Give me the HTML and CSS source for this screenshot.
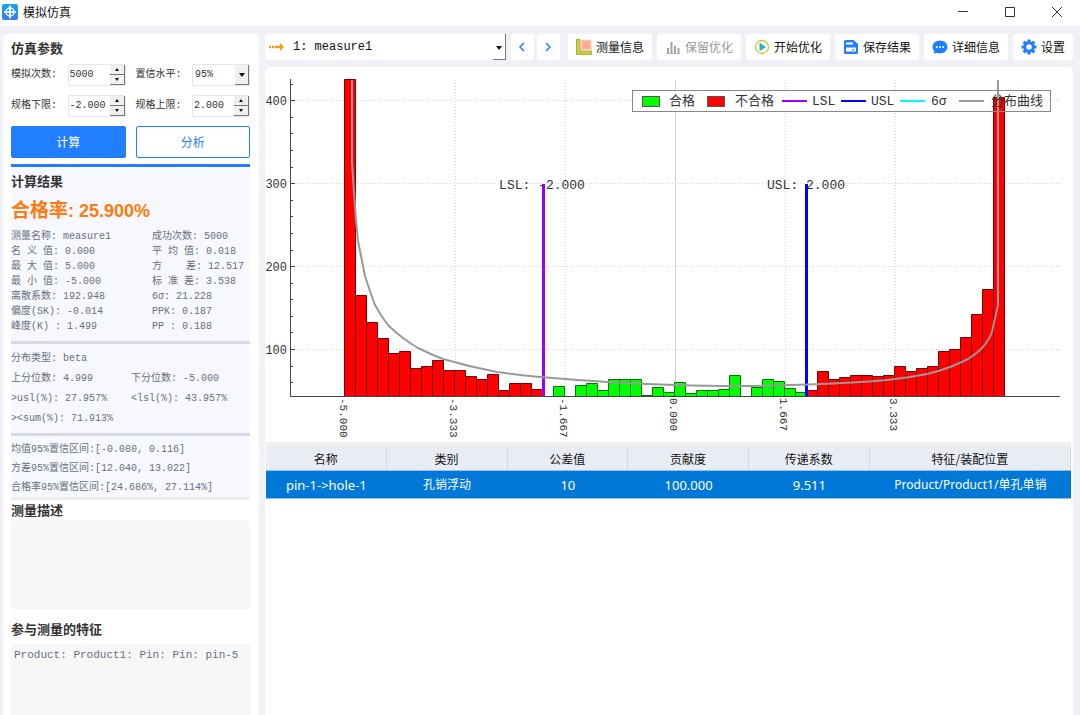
FILE: index.html
```html
<!DOCTYPE html>
<html lang="zh-CN">
<head>
<meta charset="utf-8">
<meta name="viewport" content="width=device-width, initial-scale=1">
<title>模拟仿真</title>
<link rel="stylesheet" href="styles.css">
</head>
<body>
<header class="titlebar">
  <svg class="app-icon" viewBox="0 0 16 16" aria-hidden="true">
    <defs><linearGradient id="app-bg" x1="0" y1="0" x2="0" y2="1"><stop offset="0" stop-color="#19a5f2"/><stop offset="1" stop-color="#3b7bea"/></linearGradient></defs>
    <rect width="16" height="16" rx="2" fill="url(#app-bg)"/>
    <circle cx="8" cy="8" r="4" fill="none" stroke="#fff" stroke-width="1.4"/>
    <path d="M8 1.6v12.8M2 8h12" stroke="#fff" stroke-width="1.6"/>
  </svg>
  <h1 class="title">模拟仿真</h1>
  <div class="window-controls">
    <button class="window-button" type="button" aria-label="最小化"><svg viewBox="0 0 12 12"><path d="M1 5.500h10"/></svg></button>
    <button class="window-button" type="button" aria-label="最大化"><svg viewBox="0 0 12 12"><path d="M1.5 1.5h9v9h-9z"/></svg></button>
    <button class="window-button" type="button" aria-label="关闭"><svg viewBox="0 0 12 12"><path d="M1 1l10 10M11 1L1 11"/></svg></button>
  </div>
</header>

<div class="workspace">
  <aside class="sidebar">
    <h2 class="heading">仿真参数</h2>
    <form class="params">
      <div class="field">
        <label for="runs">模拟次数:</label>
        <div class="spin">
          <input id="runs" type="text" value="5000">
          <div class="spin-buttons"><button type="button" class="step step-up" aria-label="增加模拟次数"></button><button type="button" class="step step-down" aria-label="减少模拟次数"></button></div>
        </div>
      </div>
      <div class="field">
        <label for="level">置信水平:</label>
        <div class="drop"><select id="level"><option>95%</option></select></div>
      </div>
      <div class="field">
        <label for="lower">规格下限:</label>
        <div class="spin">
          <input id="lower" type="text" value="-2.000">
          <div class="spin-buttons"><button type="button" class="step step-up" aria-label="增加下限"></button><button type="button" class="step step-down" aria-label="减少下限"></button></div>
        </div>
      </div>
      <div class="field">
        <label for="upper">规格上限:</label>
        <div class="spin">
          <input id="upper" type="text" value="2.000">
          <div class="spin-buttons"><button type="button" class="step step-up" aria-label="增加上限"></button><button type="button" class="step step-down" aria-label="减少上限"></button></div>
        </div>
      </div>
      <button class="action action-primary" type="button">计算</button>
      <button class="action" type="button">分析</button>
    </form>

    <section class="results">
      <h2 class="heading">计算结果</h2>
      <p class="rate"><span class="rate-label">合格率</span>: 25.900%</p>
      <div class="stats">
        <span>测量名称: measure1</span><span>成功次数: 5000</span>
        <span>名 义 值: 0.000</span><span>平 均 值: 0.018</span>
        <span>最 大 值: 5.000</span><span>方    差: 12.517</span>
        <span>最 小 值: -5.000</span><span>标 准 差: 3.538</span>
        <span>离散系数: 192.948</span><span>6σ: 21.228</span>
        <span>偏度(SK): -0.014</span><span>PPK: 0.187</span>
        <span>峰度(K) : 1.499</span><span>PP : 0.188</span>
      </div>
      <div class="quantiles">
        <span class="wide">分布类型: beta</span>
        <span>上分位数: 4.999</span><span>下分位数: -5.000</span>
        <span>&gt;usl(%): 27.957%</span><span>&lt;lsl(%): 43.957%</span>
        <span class="wide">&gt;&lt;sum(%): 71.913%</span>
      </div>
      <div class="intervals">
        <span>均值95%置信区间:[-0.080, 0.116]</span>
        <span>方差95%置信区间:[12.040, 13.022]</span>
        <span>合格率95%置信区间:[24.686%, 27.114%]</span>
      </div>
    </section>

    <h2 class="heading"><label for="description">测量描述</label></h2>
    <textarea class="note" id="description" readonly></textarea>
    <h2 class="heading heading-features"><label for="features">参与测量的特征</label></h2>
    <textarea class="note note-fill" id="features" readonly>Product: Product1: Pin: Pin: pin-5</textarea>
  </aside>

  <main class="main">
    <nav class="toolbar" aria-label="工具栏">
      <div class="measure">
        <svg class="measure-icon" viewBox="0 0 16 10" aria-hidden="true"><path d="M0 3.8h2.2v2.4H0zM3 3.8h2.2v2.4H3zM6 3.8h5V1l4 4-4 4V6.2H6z" fill="#f39a1e"/></svg>
        <select class="measure-select" aria-label="测量"><option>1: measure1</option></select>
      </div>
      <div class="pager">
        <button class="nav-button" type="button" aria-label="上一个"><svg viewBox="0 0 8 10"><path d="M6 1L2 5l4 4"/></svg></button>
        <button class="nav-button" type="button" aria-label="下一个"><svg viewBox="0 0 8 10"><path d="M2 1l4 4-4 4"/></svg></button>
      </div>
      <button class="tool" type="button">
        <svg class="icon" viewBox="0 0 16 16"><path d="M.5.500h3.500v11.500h11.500v3.500H.5z" fill="#c9d335" stroke="#98a428" stroke-width=".8"/><path d="M5 .8h10.500v10.200H5z" fill="#ffc3b3"/><path d="M6.500 2.200h7.500v7.300H6.500z" fill="#ffa795"/></svg>
        测量信息</button>
      <button class="tool" type="button" disabled>
        <svg class="icon" viewBox="0 0 16 16"><path d="M3 9v5M6.5 3v11M10 7v7M13.5 9v5" stroke="#a5a5a5" stroke-width="2"/><path d="M1 14.5h14" stroke="#b5b5b5"/></svg>
        保留优化</button>
      <button class="tool" type="button">
        <svg class="icon" viewBox="0 0 16 16"><circle cx="8" cy="8" r="6.500" fill="#fff" stroke="#b9cf36" stroke-width="1.3"/><path d="M5.500 3.800L12 8l-6.500 4.200z" fill="#22b3b8"/></svg>
        开始优化</button>
      <button class="tool" type="button">
        <svg class="icon" viewBox="0 0 16 16"><path d="M2.500 1h8L15 5v8.500A1.500 1.500 0 0 1 13.500 15h-11A1.500 1.500 0 0 1 1 13.500v-11A1.500 1.500 0 0 1 2.500 1z" fill="#217fff"/><path d="M3 3.500h7v2H3zM3 8.500h10v4H3z" fill="#fff"/><path d="M9.500 10h1.500v1.500H9.500z" fill="#217fff"/></svg>
        保存结果</button>
      <button class="tool" type="button">
        <svg class="icon" viewBox="0 0 16 16"><path d="M8 1.500c4.200 0 7.500 2.800 7.500 6.400S12.200 14.300 8 14.300c-1 0-1.900-.1-2.700-.4L2 14.600l.2-2.600C1.100 11 .5 9.500.5 7.900.500 4.300 3.800 1.500 8 1.500z" fill="#217fff"/><circle cx="4.800" cy="8" r="1" fill="#fff"/><circle cx="8" cy="8" r="1" fill="#fff"/><circle cx="11.200" cy="8" r="1" fill="#fff"/></svg>
        详细信息</button>
      <button class="tool" type="button">
        <svg class="icon" viewBox="0 0 16 16"><circle cx="8" cy="8" r="4.300" fill="none" stroke="#217fff" stroke-width="3"/><g stroke="#217fff" stroke-width="3.200"><path d="M8 .5v3M8 12.500v3M.5 8h3M12.500 8h3M2.700 2.700l2.100 2.100M11.200 11.200l2.100 2.100M13.300 2.700l-2.100 2.100M4.800 11.200l-2.100 2.100"/></g></svg>
        设置</button>
    </nav>

    <section class="panel">
      <svg class="chart" viewBox="265 67 808 375" role="img" aria-label="测量结果分布直方图">
        <g class="grid">
          <path d="M291 100.500H1060M291 183.500H1060M291 266.500H1060M291 349.500H1060M455.500 80V396M565.500 80V396M785.500 80V396M895.500 80V396"/>
          <path class="zero" d="M675.500 80V396"/>
        </g>
        <rect class="legend-back" x="632" y="90" width="419" height="22"/>
        <g class="bars" transform="translate(-.5 .5)">
          <path class="fail" d="M345 396V79h11V396zM356 396V295h11V396zM367 396V322h11V396zM378 396V338h11V396zM389 396V353h11V396zM400 396V351h11V396zM411 396V368h11V396zM422 396V366h11V396zM433 396V360h11V396zM444 396V370h11V396zM455 396V370h11V396zM466 396V376h11V396zM477 396V379h11V396zM488 396V374h11V396zM499 396V390h11V396zM510 396V383h11V396zM521 396V383h11V396zM532 396V389h11V396z"/>
          <path class="pass" d="M554 396V386h11V396zM576 396V385h11V396zM587 396V383h11V396zM598 396V390h11V396zM609 396V379h11V396zM620 396V379h11V396zM631 396V379h11V396zM642 396V395h11V396zM653 396V387h11V396zM664 396V392h11V396zM675 396V382h11V396zM686 396V393h11V396zM697 396V390h11V396zM708 396V390h11V396zM719 396V389h11V396zM730 396V375h11V396zM752 396V387h11V396zM763 396V379h11V396zM774 396V381h11V396zM785 396V388h11V396zM796 396V392h11V396z"/>
          <path class="fail" d="M807 396V390h11V396zM818 396V371h11V396zM829 396V379h11V396zM840 396V377h11V396zM851 396V375h11V396zM862 396V375h11V396zM873 396V376h11V396zM884 396V375h11V396zM895 396V366h11V396zM906 396V371h11V396zM917 396V368h11V396zM928 396V366h11V396zM939 396V351h11V396zM950 396V349h11V396zM961 396V337h11V396zM972 396V314h11V396zM983 396V289h11V396zM994 396V97h11V396z"/>
        </g>
        <path class="lsl" d="M543.500 184V396"/>
        <path class="usl" d="M806.500 184V396"/>
        <path class="curve" d="M352 80V163L356 220L358 241L365 276Q370 292 375 305Q381 316 388 325Q395 332 403 338Q411 344 418 348Q430 354 443 359Q470 367 497 372Q520 375 540 377Q575 380 608 382Q640 384 675 385Q740 387 790 385Q828 384 860 382Q880 381 895 379Q912 377 927 374Q940 371 950 367Q960 363 968 359Q976 354 982 348Q989 340 992 332L998 305V80"/>
        <path class="axis" d="M290.500 79V396.500H1060M290 100.500h5M290 183.500h5M290 266.500h5M290 349.500h5M290 84.500h3M290 117.500h3M290 133.500h3M290 150.500h3M290 167.500h3M290 200.500h3M290 216.500h3M290 233.500h3M290 250.500h3M290 283.500h3M290 299.500h3M290 316.500h3M290 332.500h3M290 366.500h3M290 382.500h3"/>
        <g class="y-labels">
          <text x="287" y="105">400</text><text x="287" y="188">300</text><text x="287" y="271">200</text><text x="287" y="354">100</text>
        </g>
        <g class="x-labels">
          <text transform="translate(340 398) rotate(90)">-5.000</text>
          <text transform="translate(450 398) rotate(90)">-3.333</text>
          <text transform="translate(560 398) rotate(90)">-1.667</text>
          <text transform="translate(670 398) rotate(90)">0.000</text>
          <text transform="translate(780 398) rotate(90)">1.667</text>
          <text transform="translate(890 398) rotate(90)">3.333</text>
        </g>
        <g class="limit-labels"><text x="542" y="189">LSL: -2.000</text><text x="806" y="189">USL: 2.000</text></g>
        <rect class="legend-frame" x="632.500" y="90.500" width="418" height="21"/>
        <rect class="pass swatch" x="642.500" y="96.500" width="17" height="10"/>
        <rect class="fail swatch" x="707.500" y="96.500" width="17" height="10"/>
        <path class="key lsl" d="M782 101h25"/>
        <path class="key usl" d="M841 101h25"/>
        <path class="key sigma" d="M900 101h25"/>
        <path class="key curve" d="M959 101h25"/>
        <g class="legend-text">
          <text x="669" y="105">合格</text><text x="735" y="105">不合格</text><text x="812" y="105">LSL</text><text x="871" y="105">USL</text><text x="931" y="105">6σ</text><text x="991" y="105">分布曲线</text>
        </g>
      </svg>

      <div class="table-wrap">
        <table class="table">
          <thead><tr><th>名称</th><th>类别</th><th>公差值</th><th>贡献度</th><th>传递系数</th><th class="col-wide">特征/装配位置</th></tr></thead>
          <tbody><tr><td>pin-1-&gt;hole-1</td><td class="chinese">孔销浮动</td><td>10</td><td>100.000</td><td>9.511</td><td class="chinese">Product/Product1/单孔单销</td></tr></tbody>
        </table>
      </div>
    </section>
  </main>
</div>
</body>
</html>
```
FILE: styles.css
```css
:root {
  --mono: "Liberation Mono", "Noto Sans CJK SC", monospace;
  --sans: "Noto Sans CJK SC", sans-serif;
  --blue: #217fff;
  --ink: #333;
  --muted: #687080;
}

* {
  box-sizing: border-box;
}

body {
  margin: 0;
  min-height: 100vh;
  display: flex;
  flex-direction: column;
  background: #eff1f6;
  color: #111;
  font: 12px/16px var(--sans);
}

button,
input,
select,
textarea {
  margin: 0;
  padding: 0;
  border: 0;
  border-radius: 0;
  background: none;
  color: inherit;
  font: inherit;
}

select {
  appearance: none;
}

h1,
h2,
p {
  margin: 0;
}

/* Title bar */
.titlebar {
  display: flex;
  align-items: center;
  height: 26px;
  padding: 0 0 3px 2px;
  background: #fff;
}

.app-icon {
  width: 16px;
  height: 16px;
  margin-right: 5px;
}

.title {
  flex: 1;
  font-size: 12px;
  font-weight: 400;
}

.window-controls {
  display: flex;
}

.window-button {
  display: grid;
  place-items: center;
  width: 47px;
  height: 22px;
}

.window-button svg {
  width: 12px;
  height: 12px;
  fill: none;
  stroke: #333;
}

.workspace {
  flex: 1;
  display: grid;
  grid-template-columns: 256px minmax(0, 1fr);
  gap: 6px;
  padding: 8px 7px 0 3px;
}

/* Sidebar */
.sidebar {
  display: flex;
  flex-direction: column;
  padding: 4px 9px 0 8px;
  border-radius: 5px 5px 0 0;
  background: #fff;
}

.heading {
  color: var(--ink);
  font-size: 13px;
  line-height: 20px;
  font-weight: 700;
}

.params {
  display: grid;
  grid-template-columns: 1fr 1fr;
  gap: 9px 10px;
  padding: 6px 0;
  font: 10px/16px var(--mono);
  color: var(--ink);
}

.field {
  display: flex;
  align-items: center;
  justify-content: space-between;
}

.spin,
.drop {
  display: flex;
  width: 58px;
  height: 22px;
  border: 1px solid #e6e6e6;
  border-radius: 2px;
  background: #fff;
}

.spin input {
  flex: 1;
  min-width: 0;
  padding-left: 1px;
}

.spin-buttons {
  display: grid;
  grid-template-rows: 1fr 1fr;
  width: 15px;
}

.step {
  display: grid;
  place-items: center;
  border: solid #777;
  border-width: 0 1px 1px 0;
  background: #f0f0f0;
}

.step::before {
  content: "";
  border: solid transparent;
  border-width: 0 2px;
}

.step-up::before {
  border-bottom: 3px solid #111;
}

.step-down::before {
  border-top: 3px solid #111;
}

.drop {
  position: relative;
}

.drop select {
  flex: 1;
  padding-left: 2px;
}

.drop::after {
  content: "";
  width: 13px;
  border: solid #777;
  border-width: 0 1px 1px 0;
  background: #f0f0f0;
  pointer-events: none;
}

.drop::before {
  content: "";
  position: absolute;
  right: 4px;
  top: 8px;
  border: solid transparent;
  border-width: 4px 3px 0;
  border-top-color: #111;
  pointer-events: none;
}

.action {
  height: 32px;
  border: 1px solid var(--blue);
  border-radius: 2px;
  color: var(--blue);
  font: 12px/16px var(--sans);
}

.action-primary {
  background: var(--blue);
  color: #fff;
}

.results {
  display: grid;
  padding-top: 6px;
  border-top: 3px solid var(--blue);
  border-bottom: 3px solid #eee;
  background: #f7f8fd;
  color: var(--muted);
  font: 10px/15px var(--mono);
  white-space: pre;
}

.rate {
  padding: 6px 0;
  color: #ff7a0d;
  font: 700 18px/24px "Liberation Sans", "Noto Sans CJK SC", sans-serif;
}

.rate-label {
  font-size: 19px;
}

.stats,
.quantiles,
.intervals {
  display: grid;
}

.stats {
  grid-template-columns: 141px 1fr;
  padding-bottom: 7px;
}

.quantiles {
  grid-template-columns: 120px 1fr;
  padding: 5px 0 4px;
  border-top: 3px solid #d6d9e3;
  line-height: 20px;
}

.wide {
  grid-column: 1 / -1;
}

.intervals {
  padding-top: 4px;
  border-top: 3px solid #d6d9e3;
  line-height: 19px;
}

.note {
  flex: none;
  height: 89px;
  padding: 2px 3px;
  border-radius: 3px;
  background: #f7f7f7;
  color: var(--muted);
  font: 11px/18px var(--mono);
  resize: none;
}

.heading-features {
  padding: 10px 0 5px;
}

.note-fill {
  flex: 1 0 70px;
  border-radius: 3px 3px 0 0;
}

/* Toolbar */
.main {
  display: flex;
  flex-direction: column;
  gap: 7px;
}

.toolbar {
  display: flex;
  gap: 5px;
  height: 26px;
}

.measure {
  flex: 1;
  display: flex;
  align-items: center;
  position: relative;
  padding-left: 4px;
  border-radius: 3px;
  background: #fff;
}

.measure::before {
  content: "";
  position: absolute;
  right: 4px;
  top: 12px;
  border: solid transparent;
  border-width: 4px 3px 0;
  border-top-color: #111;
  pointer-events: none;
}

.measure::after {
  content: "";
  align-self: stretch;
  width: 12px;
  border: solid #777;
  border-width: 0 1px 1px 0;
}

.measure-icon {
  width: 16px;
  height: 10px;
}

.measure-select {
  flex: 1;
  height: 26px;
  padding-left: 8px;
  font: 12px/16px var(--mono);
}

.pager {
  display: flex;
  gap: 3px;
  margin-right: 3px;
}

.nav-button,
.tool {
  display: flex;
  align-items: center;
  justify-content: center;
  border-radius: 3px;
  background: #fff;
}

.nav-button {
  width: 23px;
}

.nav-button svg {
  width: 8px;
  height: 10px;
  fill: none;
  stroke: var(--blue);
  stroke-width: 1.5;
}

.tool {
  gap: 4px;
  padding: 0 8px;
  white-space: nowrap;
}

.tool:disabled {
  color: #9a9a9a;
}

.icon {
  width: 16px;
  height: 16px;
}

/* Chart */
.panel {
  flex: 1;
  border-radius: 5px 5px 0 0;
  background: #fff;
}

.chart {
  display: block;
  width: 100%;
  height: auto;
  font-family: var(--mono);
  fill: #333;
}

.chart path {
  fill: none;
}

.grid path {
  stroke: #d4d4d4;
  stroke-dasharray: 1 2;
}

.grid .zero {
  stroke: #ccc;
  stroke-dasharray: none;
}

.legend-back {
  fill: #fff;
}

.legend-frame {
  fill: none;
  stroke: #888;
}

.chart .fail {
  fill: #f00;
  stroke: #700;
}

.chart .pass {
  fill: #0f0;
  stroke: #070;
}

.chart .swatch {
  stroke: #555;
}

.lsl,
.usl {
  stroke-width: 3;
}

.lsl {
  stroke: #90f;
}

.usl {
  stroke: #00f;
}

.curve {
  stroke: #999;
  stroke-width: 2;
}

.sigma {
  stroke: #0ff;
}

.key {
  stroke-width: 2;
}

.axis {
  stroke: #444;
}

.y-labels {
  font-size: 12px;
  text-anchor: end;
}

.x-labels {
  font-size: 11px;
}

.limit-labels {
  font-size: 13px;
  text-anchor: middle;
}

.legend-text {
  font-size: 13px;
}

/* Table */
.table-wrap {
  padding: 0 2px 0 1px;
}

.table {
  width: 100%;
  border-top: 5px solid #f0f0f0;
  border-spacing: 0;
  table-layout: fixed;
  text-align: center;
}

.table th {
  width: 15%;
  height: 23px;
  padding: 0;
  border-right: 1px solid #d5d8de;
  background: #e9ecf3;
  font-weight: 400;
}

.table .col-wide {
  width: 25%;
}

.table td {
  height: 29px;
  padding: 0;
  border: solid #8fc3ee;
  border-width: 1px 0;
  background: #0078d7;
  color: #fff;
  font-family: "Noto Sans", "Noto Sans CJK SC", sans-serif;
  font-size: 13px;
}

.table .chinese {
  font-size: 12px;
}
```
